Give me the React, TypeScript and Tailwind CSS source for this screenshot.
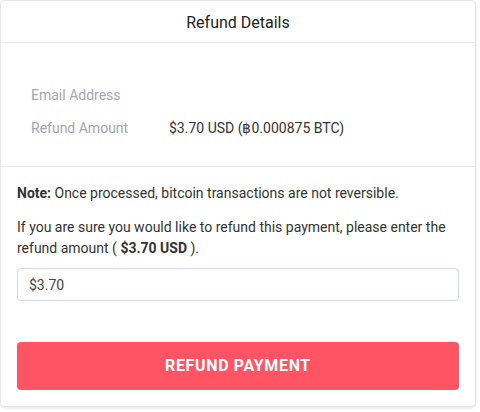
import { useState } from 'react'

function App() {
  const [amount, setAmount] = useState('$3.70')

  return (
    <div className="min-h-screen bg-white font-['Roboto',sans-serif]">
      <div className="w-[476px] overflow-hidden rounded-[5px] border border-[#e6e6e6] bg-white shadow-[0_1px_3px_rgba(0,0,0,0.12)]">
        <header className="flex h-[42px] items-center justify-center border-b border-[#ececec] pt-[2px] text-[16px] text-[#222]">
          Refund Details
        </header>

        <section className="border-b border-[#ececec] pb-[28px] pl-[30px] pt-[42px] text-[14px]">
          <div className="flex h-[20px] items-center">
            <span className="w-[138px] text-[#a3a6b0]">Email Address</span>
            <span className="text-[#333]"></span>
          </div>
          <div className="mt-[13px] flex h-[20px] items-center">
            <span className="w-[138px] text-[#a3a6b0]">Refund Amount</span>
            <span className="text-[#333]">$3.70 USD (฿0.000875 BTC)</span>
          </div>
        </section>

        <section className="px-4 pb-4 pt-[16px] text-[14px] text-[#333]">
          <p className="leading-[21px]">
            <strong className="font-bold">Note:</strong> Once processed, bitcoin transactions are not reversible.
          </p>
          <p className="mt-[13px] leading-[21px]">
            If you are sure you would like to refund this payment, please enter the refund amount ({' '}
            <strong className="font-bold">$3.70 USD</strong> ).
          </p>
          <input
            className="mt-[9px] h-[33px] w-full rounded-[4px] border border-[#d3d9e0] px-[11px] text-[14px] text-[#444] focus:outline-none"
            onChange={(event) => setAmount(event.target.value)}
            type="text"
            value={amount}
          />
          <button
            className="mt-[41px] flex h-[48px] w-full items-center justify-center rounded-[4px] bg-[#ff5463] text-[16px] font-bold uppercase tracking-[0.04em] text-white"
            type="button"
          >
            Refund Payment
          </button>
        </section>
      </div>
    </div>
  )
}

export default App
